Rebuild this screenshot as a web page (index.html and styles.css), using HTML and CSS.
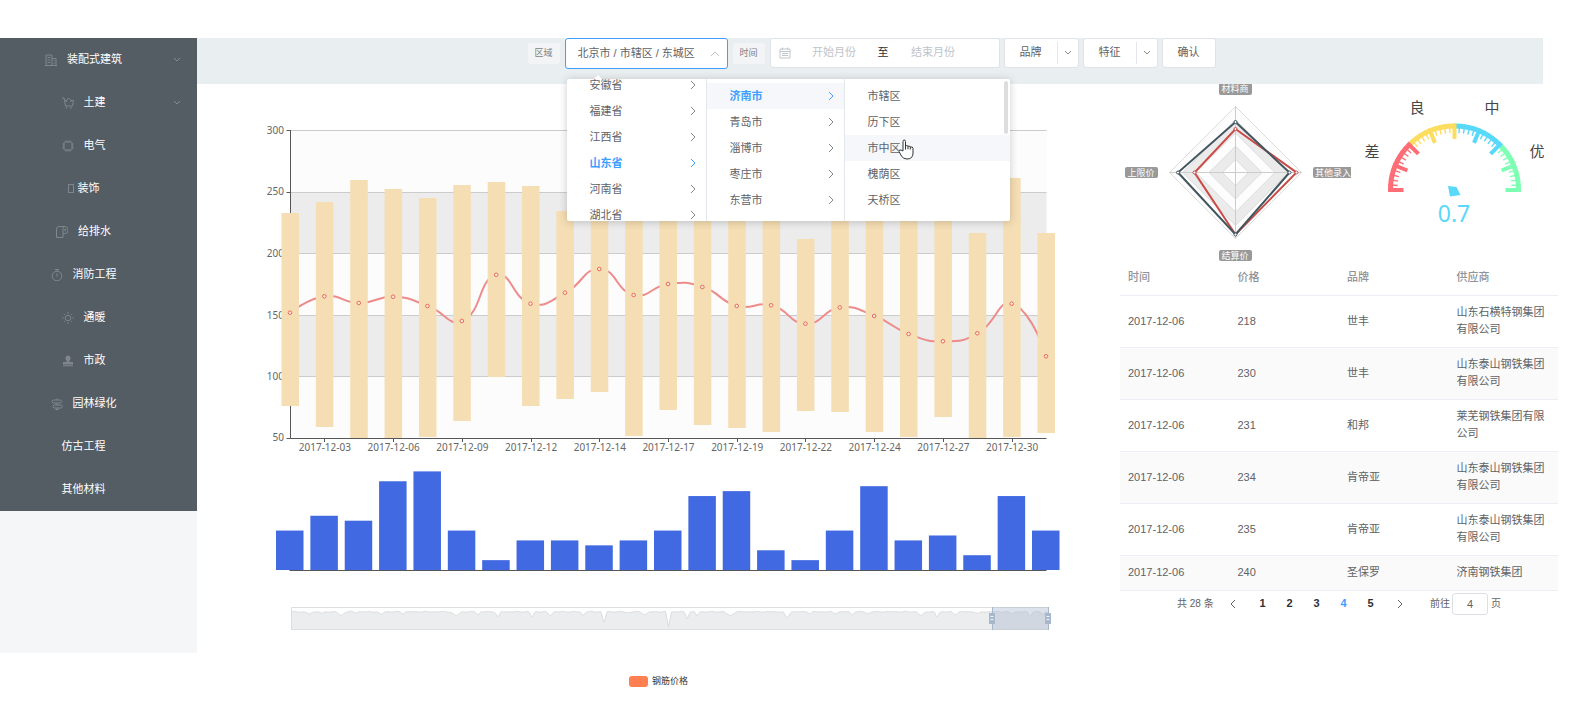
FILE: index.html
```html
<!DOCTYPE html>
<html lang="zh-CN">
<head>
<meta charset="utf-8">
<title>材料价格</title>
<link rel="stylesheet" href="styles.css">
</head>
<body>
<div class="app">
  <aside class="sidebar">
    <nav class="menu">
      <a class="menu-item" href="#"><span class="menu-label"><svg class="icon" viewBox="0 0 12 12"><path d="M1 11.5V1h6v10.500M7 4.500h4v7M0 11.500h12M2.500 3.500h3M2.500 6h3M2.500 8.500h3M8.500 7h1M8.500 9.500h1"/></svg>装配式建筑</span><svg class="chevron" viewBox="0 0 8 8"><path d="M1 2l3 3 3-3"/></svg></a>
      <a class="menu-item" href="#"><span class="menu-label"><svg class="icon" viewBox="0 0 12 12"><path d="M0 1h2l1.500 8h7L11.500 3.500H9M2.500 3.500h2M4.500 5V3.500L6.700 1 9 3.500V5"/><circle cx="4.500" cy="11" r=".4"/><circle cx="9" cy="11" r=".4"/></svg>土建</span><svg class="chevron" viewBox="0 0 8 8"><path d="M1 2l3 3 3-3"/></svg></a>
      <a class="menu-item" href="#"><span class="menu-label"><svg class="icon" viewBox="0 0 12 12"><rect x="2" y="2" width="8" height="8" rx="1"/><path d="M4 .5v1.500M6 .5v1.500M8 .5v1.500M4 10v1.500M6 10v1.500M8 10v1.500M.5 4H2M.5 6H2M.5 8H2M10 4h1.500M10 6h1.500M10 8h1.500"/></svg>电气</span></a>
      <a class="menu-item" href="#"><span class="menu-label menu-label-tight"><svg class="icon-narrow" viewBox="0 0 6 9"><rect x=".5" y=".5" width="5" height="8"/></svg>装饰</span></a>
      <a class="menu-item" href="#"><span class="menu-label"><svg class="icon" viewBox="0 0 12 12"><path d="M3 .5h6.500a2.500 3.500 0 0 1 0 7H7v4H.5V3Q.5.500 3 .500M7 7.500V3Q7 .500 9 .500"/><circle cx="9.300" cy="4" r=".8"/></svg>给排水</span></a>
      <a class="menu-item" href="#"><span class="menu-label"><svg class="icon" viewBox="0 0 12 12"><circle cx="6" cy="7" r="4.800"/><path d="M4 .5h4M6 .5v2M6 4.500v3"/></svg>消防工程</span></a>
      <a class="menu-item" href="#"><span class="menu-label"><svg class="icon" viewBox="0 0 12 12"><circle cx="6" cy="6" r="2.800"/><path d="M6 0v1.500M6 10.500V12M0 6h1.500M10.500 6H12M1.800 1.800l1 1M9.200 9.200l1 1M1.800 10.200l1-1M9.200 2.800l1-1"/></svg>通暖</span></a>
      <a class="menu-item" href="#"><span class="menu-label"><svg class="icon icon-solid" viewBox="0 0 12 12"><path d="M6 .5a2.800 2.800 0 0 1 1.500 5L7.300 7H11v2.500H1V7h3.700l-.2-1.500A2.800 2.800 0 0 1 6 .500M1 10.300h10v1H1z"/></svg>市政</span></a>
      <a class="menu-item" href="#"><span class="menu-label"><svg class="icon" viewBox="0 0 12 12"><path d="M2 2h7.500L11 3.500 9.500 5H2L.8 3.500zM3 7h7.500l1.200 1.500-1.200 1.500H3L1.500 8.500zM6 .5V2M6 5v2M6 10v1.500M4.500 11.500h3"/></svg>园林绿化</span></a>
      <a class="menu-item" href="#"><span class="menu-label">仿古工程</span></a>
      <a class="menu-item" href="#"><span class="menu-label">其他材料</span></a>
    </nav>
  </aside>

  <div class="main">
    <header class="toolbar">
      <label class="tag" for="region">区域</label>
      <div class="cascader">
        <input id="region" class="cascader-input" type="text" value="北京市 / 市辖区 / 东城区" readonly>
        <svg class="cascader-arrow" viewBox="0 0 10 10"><path d="M1 7l4-4 4 4"/></svg>
        <div class="dropdown">
          <span class="dropdown-notch"></span>
          <ul class="column column-province">
            <li class="option">安徽省<svg class="next" viewBox="0 0 8 10"><path d="M2 1l4 4-4 4"/></svg></li>
            <li class="option">福建省<svg class="next" viewBox="0 0 8 10"><path d="M2 1l4 4-4 4"/></svg></li>
            <li class="option">江西省<svg class="next" viewBox="0 0 8 10"><path d="M2 1l4 4-4 4"/></svg></li>
            <li class="option option-active">山东省<svg class="next" viewBox="0 0 8 10"><path d="M2 1l4 4-4 4"/></svg></li>
            <li class="option">河南省<svg class="next" viewBox="0 0 8 10"><path d="M2 1l4 4-4 4"/></svg></li>
            <li class="option">湖北省<svg class="next" viewBox="0 0 8 10"><path d="M2 1l4 4-4 4"/></svg></li>
          </ul>
          <ul class="column column-city">
            <li class="option option-active option-hover">济南市<svg class="next" viewBox="0 0 8 10"><path d="M2 1l4 4-4 4"/></svg></li>
            <li class="option">青岛市<svg class="next" viewBox="0 0 8 10"><path d="M2 1l4 4-4 4"/></svg></li>
            <li class="option">淄博市<svg class="next" viewBox="0 0 8 10"><path d="M2 1l4 4-4 4"/></svg></li>
            <li class="option">枣庄市<svg class="next" viewBox="0 0 8 10"><path d="M2 1l4 4-4 4"/></svg></li>
            <li class="option">东营市<svg class="next" viewBox="0 0 8 10"><path d="M2 1l4 4-4 4"/></svg></li>
          </ul>
          <ul class="column column-district">
            <li class="option">市辖区</li>
            <li class="option">历下区</li>
            <li class="option option-hover">市中区<svg class="hand" viewBox="0 0 16 21"><path d="M5 12V2.500Q5 1 6.200 1T7.500 2.500V7Q9 5.800 10 7.300 11.500 6.300 12.300 8 14.800 7.300 15 9.500V14q0 6-6 6-4 0-5.500-3L1 12.500q0-2 2-1.500z"/><path d="M7.500 7v3.500M10 7.300v3M12.300 8v2.500"/></svg></li>
            <li class="option">槐荫区</li>
            <li class="option">天桥区</li>
          </ul>
          <span class="scrollbar"></span>
        </div>
      </div>
      <label class="tag" for="month-start">时间</label>
      <div class="daterange">
        <svg class="calendar" viewBox="0 0 12 12"><path d="M1 2h10v9H1zM1 4.500h10M3.500.500v2.500M8.500.500v2.500M3 6.500h6M3 8.500h6"/></svg>
        <input id="month-start" class="date-input" type="text" placeholder="开始月份">
        <span class="date-sep">至</span>
        <input class="date-input" type="text" placeholder="结束月份" aria-label="结束月份">
      </div>
      <div class="split">
        <button class="split-main" type="button">品牌</button><button class="split-toggle" type="button" aria-label="展开品牌"><svg class="chevron-dark" viewBox="0 0 8 8"><path d="M1 2l3 3 3-3"/></svg></button>
      </div>
      <div class="split">
        <button class="split-main" type="button">特征</button><button class="split-toggle" type="button" aria-label="展开特征"><svg class="chevron-dark" viewBox="0 0 8 8"><path d="M1 2l3 3 3-3"/></svg></button>
      </div>
      <button class="confirm" type="button">确认</button>
    </header>

    <div class="content">
      <section class="chart-panel">
        <svg id="price-chart" class="price-chart" viewBox="197 84 923 569" role="img" aria-label="钢筋价格"></svg>
      </section>

      <section class="detail">
        <div class="gauges">
          <svg class="radar" viewBox="1120 84 231 177">
            <g class="radar-rings">
              <path class="ring-light" d="M1235.500 106.500l66 66-66 66-66-66z"/>
              <path class="ring-dark" d="M1235.500 119.700l52.800 52.800-52.800 52.800-52.800-52.800z"/>
              <path class="ring-light" d="M1235.500 132.900l39.600 39.600-39.600 39.600-39.600-39.600z"/>
              <path class="ring-dark" d="M1235.500 146.100l26.400 26.400-26.400 26.400-26.400-26.400z"/>
              <path class="ring-light" d="M1235.500 159.300l13.200 13.200-13.200 13.200-13.200-13.200z"/>
              <path d="M1169.500 172.500h132M1235.500 106.500v132"/>
            </g>
            <path class="radar-red" d="M1235.500 129l61 43.500-61 62-41-62z"/>
            <path class="radar-navy" d="M1235.500 122l54 50.500-54 62-57.500-62z"/>
            <g class="radar-red radar-dots"><circle cx="1235.500" cy="129" r="1.500"/><circle cx="1296.500" cy="172.500" r="1.500"/><circle cx="1194.500" cy="172.500" r="1.500"/></g>
            <g class="radar-navy radar-dots"><circle cx="1235.500" cy="122" r="1.500"/><circle cx="1289.500" cy="172.500" r="1.500"/><circle cx="1235.500" cy="234.500" r="1.500"/><circle cx="1178" cy="172.500" r="1.500"/></g>
            <g class="radar-names">
              <rect x="1219" y="83" width="33" height="12" rx="2"/><text x="1235" y="92">材料商</text>
              <rect x="1125" y="167" width="33" height="11" rx="2"/><text x="1141" y="176">上限价</text>
              <rect x="1313" y="167" width="43" height="11" rx="2"/><text x="1333" y="176">其他录入</text>
              <rect x="1219" y="250" width="33" height="11" rx="2"/><text x="1235" y="259">结算价</text>
            </g>
          </svg>
          <svg id="gauge" class="gauge" viewBox="1351 84 207 177">
            <g id="gauge-scale"></g>
            <path class="gauge-needle" d="M1448 186l8.500 1 4 8-10.500 1.500z"/>
            <g class="gauge-names">
              <text x="1372" y="157">差</text><text x="1417" y="113">良</text><text x="1492" y="113">中</text><text x="1537" y="157">优</text>
            </g>
            <text class="gauge-value" x="1454" y="222">0.7</text>
          </svg>
        </div>
        <table class="prices">
          <thead><tr><th>时间</th><th>价格</th><th>品牌</th><th>供应商</th></tr></thead>
          <tbody>
            <tr><td>2017-12-06</td><td>218</td><td>世丰</td><td>山东石横特钢集团有限公司</td></tr>
            <tr><td>2017-12-06</td><td>230</td><td>世丰</td><td>山东泰山钢铁集团有限公司</td></tr>
            <tr><td>2017-12-06</td><td>231</td><td>和邦</td><td>莱芜钢铁集团有限公司</td></tr>
            <tr><td>2017-12-06</td><td>234</td><td>肯帝亚</td><td>山东泰山钢铁集团有限公司</td></tr>
            <tr><td>2017-12-06</td><td>235</td><td>肯帝亚</td><td>山东泰山钢铁集团有限公司</td></tr>
            <tr><td>2017-12-06</td><td>240</td><td>圣保罗</td><td>济南钢铁集团</td></tr>
          </tbody>
        </table>
        <div class="pagination">
          <span class="total">共 28 条</span>
          <button class="page page-prev" type="button" aria-label="上一页"><svg class="next" viewBox="0 0 8 10"><path d="M6 1L2 5l4 4"/></svg></button>
          <button class="page" type="button">1</button>
          <button class="page" type="button">2</button>
          <button class="page" type="button">3</button>
          <button class="page page-current" type="button">4</button>
          <button class="page" type="button">5</button>
          <button class="page page-next" type="button" aria-label="下一页"><svg class="next" viewBox="0 0 8 10"><path d="M2 1l4 4-4 4"/></svg></button>
          <label class="jump">前往<input class="jump-input" type="text" value="4">页</label>
        </div>
      </section>
    </div>
  </div>
</div>
<footer class="legend"><span class="legend-swatch"></span>钢筋价格</footer>
<script src="charts.js"></script>
</body>
</html>
```
FILE: styles.css
```css
* { box-sizing: border-box; }

body {
  margin: 0;
  padding-top: 38px;
  background: #fff;
  color: #606266;
  font-family: "Liberation Sans", "Noto Sans CJK SC", sans-serif;
  font-size: 11px;
  line-height: 17px;
}

ul { margin: 0; padding: 0; list-style: none; }
button, input { font: inherit; color: inherit; }
svg { fill: none; stroke: currentColor; }

.app { display: flex; }

.sidebar { flex: 0 0 197px; background: #f4f6f8; }
.menu { background: #545c64; }
.menu-item {
  display: flex;
  align-items: center;
  height: 43px;
  padding-right: 16px;
  color: #fff;
  text-decoration: none;
}
.menu-label {
  flex: 1;
  display: flex;
  align-items: center;
  justify-content: center;
  gap: 10px;
  padding-right: 14px;
}
.menu-item .chevron { margin-left: -8px; }
.menu-label-tight { gap: 4px; }
.icon { width: 12px; height: 12px; color: #7f868e; }
.icon-narrow { width: 6px; height: 9px; color: #7f868e; }
.icon-solid { fill: currentColor; stroke: none; }
.chevron { width: 8px; height: 8px; color: #848b93; }
.chevron-dark { width: 8px; height: 8px; color: #85888e; }

.main { flex: 1; min-width: 0; padding-right: 28px; }

.toolbar {
  display: flex;
  justify-content: center;
  align-items: flex-start;
  gap: 4px;
  height: 46px;
  margin-right: 15px;
  padding-left: 2px;
  background: #e9eef0;
}
.tag {
  width: 34px;
  height: 23px;
  margin-top: 4px;
  border: 1px solid #ebeef1;
  border-radius: 3px;
  background: #f3f4f5;
  color: #7c7f84;
  font-size: 9px;
  line-height: 21px;
  text-align: center;
}

.cascader { position: relative; width: 163px; }
.cascader-input {
  display: block;
  width: 100%;
  height: 31px;
  padding: 0 12px 3px;
  border: 1px solid #409eff;
  border-radius: 3px;
  background: #fff;
  outline: none;
}
.cascader-arrow {
  position: absolute;
  top: 11px;
  right: 8px;
  width: 10px;
  height: 10px;
  color: #c0c4cc;
}
.dropdown {
  position: absolute;
  z-index: 2;
  top: 41px;
  left: 2px;
  display: flex;
  height: 142px;
  border-radius: 2px;
  background: #fff;
  box-shadow: 0 1px 8px rgba(0, 0, 0, .2);
}
.dropdown-notch {
  position: absolute;
  top: -4px;
  left: 26px;
  border: 5px solid transparent;
  border-top: 0;
  border-bottom-color: #fff;
}
.column { display: flex; flex-direction: column; overflow: hidden; }
.column-province { width: 140px; justify-content: center; border-right: 1px solid #e4e7ed; }
.column-city { width: 138px; padding-top: 4px; border-right: 1px solid #e4e7ed; }
.column-district { width: 165px; padding-top: 4px; }
.option {
  position: relative;
  flex: none;
  display: flex;
  align-items: center;
  justify-content: space-between;
  height: 26px;
  padding: 0 9px 0 23px;
}
.option-active { color: #409eff; font-weight: 700; }
.option-hover { background: #f5f7fa; }
.next { width: 8px; height: 10px; color: #85888e; }
.option-active .next { color: #409eff; }
.hand {
  position: absolute;
  top: 4px;
  left: 53px;
  width: 16px;
  height: 21px;
  fill: #fff;
  color: #333;
}
.scrollbar {
  position: absolute;
  top: 2px;
  right: 2px;
  width: 4px;
  height: 53px;
  border-radius: 2px;
  background: #dcddde;
}

.daterange {
  display: flex;
  align-items: center;
  width: 230px;
  height: 30px;
  padding-left: 8px;
  border: 1px solid #dfe3e8;
  border-radius: 3px;
  background: #fff;
}
.calendar { width: 12px; height: 12px; color: #c0c4cc; }
.date-input {
  width: 87px;
  padding: 0 0 2px;
  border: 0;
  background: none;
  text-align: center;
  outline: none;
}
.date-input::placeholder { color: #c0c4cc; }
.date-sep { width: 12px; padding-bottom: 2px; color: #303133; }

.split, .confirm {
  height: 30px;
  border: 1px solid #dfe3e8;
  border-radius: 3px;
  background: #fff;
}
.split { display: flex; align-items: center; width: 75px; }
.split-main { flex: 1; padding: 0 0 2px; border: 0; background: none; }
.split-toggle {
  display: flex;
  align-items: center;
  justify-content: center;
  width: 21px;
  height: 22px;
  padding: 0;
  border: 0;
  border-left: 1px solid #e4e7ed;
  background: none;
}
.confirm { width: 54px; padding: 0 0 2px; }

.content { display: flex; }
.chart-panel { flex: 1; min-width: 0; }
.price-chart { display: block; width: 100%; height: auto; stroke: none; }
.band-light { fill: #fcfcfc; }
.band-dark { fill: #ececec; }
.grid-line { stroke: #ccc; }
.axis-line { stroke: #54565a; }
.axis-text {
  fill: #666;
  font-family: "Noto Sans", "Noto Sans CJK SC", sans-serif;
  font-size: 10px;
}
.axis-text-end { text-anchor: end; }
.axis-text-mid { text-anchor: middle; }
.range-bar { fill: #f5deb3; }
.volume-bar { fill: #4169e1; }
.price-line { stroke: #ee8b8b; stroke-width: 2; fill: none; }
.price-dot { stroke: #ea6a5e; fill: #fbe9d8; }
.zoom-frame { stroke: #dcdfe1; }
.zoom-shape { fill: #ecedee; stroke: #d9dbdc; }
.zoom-window { fill: #a7b7cc; fill-opacity: .4; }
.zoom-edge { stroke: #a7b7cc; }
.zoom-handle { fill: #a7b7cc; }
.zoom-grip { stroke: #eef1f5; }

.detail { flex: 0 0 438px; }
.gauges { display: flex; }
.radar { width: 231px; height: 177px; }
.gauge { width: 207px; height: 177px; stroke: none; }
.radar-rings { stroke: #ccc; }
.ring-light { fill: #fdfdfd; stroke: #dcdcdc; }
.ring-dark { fill: #ebebeb; stroke: #dcdcdc; }
.radar-red { stroke: #c94a46; stroke-width: 2; }
.radar-navy { stroke: #43565f; stroke-width: 2; }
.radar-dots { fill: #fff; stroke-width: 1; }
.radar-names { stroke: none; font-size: 9px; text-anchor: middle; }
.radar-names rect { fill: #999; }
.radar-names text { fill: #fff; }
.gauge-needle { fill: #58d9f9; }
.gauge-names { fill: #464646; font-size: 15px; text-anchor: middle; }
.gauge-value {
  fill: #58d9f9;
  font-family: "Noto Sans", sans-serif;
  font-size: 23px;
  text-anchor: middle;
}

.prices { width: 100%; table-layout: fixed; border-collapse: separate; border-spacing: 0; }
.prices th, .prices td {
  padding: 8px 8px 9px;
  border-bottom: 1px solid #ebeef5;
  text-align: left;
}
.prices th { color: #909399; font-weight: 500; }
.prices tbody tr:nth-child(even) { background: #fafafa; }

.pagination {
  display: flex;
  align-items: center;
  height: 25px;
  padding-left: 57px;
  font-size: 10px;
}
.total { width: 42px; }
.page {
  width: 27px;
  padding: 0;
  border: 0;
  background: none;
  color: #303133;
  font-size: 11px;
  font-weight: 700;
  line-height: 17px;
}
.page .next { display: block; margin: 0 auto; color: #606266; }
.page-current { color: #409eff; }
.page-prev { width: 27px; margin-right: 3px; }
.page-next { width: 32px; }
.jump { display: flex; align-items: center; margin-left: 14px; }
.jump-input {
  width: 36px;
  height: 22px;
  margin: 0 3px 0 2px;
  padding: 0;
  border: 1px solid #dcdfe6;
  border-radius: 3px;
  background: #fff;
  font-size: 11px;
  text-align: center;
}

.legend {
  display: flex;
  align-items: center;
  justify-content: center;
  gap: 4px;
  padding: 20px 466px 20px 197px;
  color: #333;
  font-size: 9px;
}
.legend-swatch { width: 19px; height: 11px; border-radius: 3px; background: #ff7f50; }
```
FILE: charts.js
```js
const NS = 'http://www.w3.org/2000/svg';

function add(parent, tag, attrs, text) {
  const el = document.createElementNS(NS, tag);
  for (const key in attrs) el.setAttribute(key, attrs[key]);
  if (text !== undefined) el.textContent = text;
  parent.appendChild(el);
  return el;
}

const LEFT = 290.5, RIGHT = 1046.5, BASE = 438, STEP = (RIGHT - LEFT) / 22;
const xAt = i => LEFT + STEP * i;

const ranges = [
  [213, 406], [202, 427], [180, 438], [189, 438], [198, 437], [185, 421],
  [182, 377], [186, 406], [211, 399], [180, 392], [190, 436], [190, 410],
  [190, 425], [190, 428], [190, 432], [239, 411], [190, 412], [190, 432],
  [190, 437], [190, 417], [233, 438], [178, 437], [233, 433]
];
const prices = [
  312.7, 296.3, 303, 296.7, 306, 321, 274.8, 303.7, 292.7, 269, 295, 284,
  287, 306, 305.3, 323.7, 307.5, 316, 334, 341.3, 333.3, 303.7, 356.3
];
const volumes = [8, 11, 10, 18, 20, 8, 2, 6, 6, 5, 6, 8, 15, 16, 4, 2, 8, 17, 6, 7, 3, 15, 8];
const days = ['03', '06', '09', '12', '14', '17', '19', '22', '24', '27', '30'];

function smoothPath(points) {
  const smooth = 0.5;
  const dist = (a, b) => Math.hypot(a[0] - b[0], a[1] - b[1]);
  let d = `M${points[0]}`;
  let out = points[0];
  for (let i = 1; i < points.length; i++) {
    const p = points[i], prev = points[i - 1], next = points[i + 1];
    let inn = p, nextOut = p;
    if (next) {
      const v = [next[0] - prev[0], next[1] - prev[1]];
      const r = dist(p, next) / (dist(p, next) + dist(p, prev));
      inn = [p[0] - v[0] * smooth * (1 - r), p[1] - v[1] * smooth * (1 - r)];
      nextOut = [p[0] + v[0] * smooth * r, p[1] + v[1] * smooth * r];
    }
    d += `C${out} ${inn} ${p}`;
    out = nextOut;
  }
  return d;
}

function drawPriceChart(svg) {
  const rows = [130.5, 192, 253.5, 315.5, 376.5, BASE];
  for (let k = 0; k < 5; k++) {
    add(svg, 'rect', { class: k % 2 ? 'band-dark' : 'band-light', x: LEFT, y: rows[k], width: RIGHT - LEFT, height: rows[k + 1] - rows[k] });
  }
  rows.forEach((y, k) => {
    const line = Math.floor(y) + 0.5;
    if (k < 5) add(svg, 'path', { class: 'grid-line', d: `M${LEFT} ${line}H${RIGHT}` });
    add(svg, 'path', { class: 'axis-line', d: `M${LEFT - 4} ${line}h4` });
    add(svg, 'text', { class: 'axis-text axis-text-end', x: 284, y: y + 3 }, 300 - k * 50);
  });
  add(svg, 'path', { class: 'axis-line', d: `M${LEFT} 130V438.500H${RIGHT}` });
  days.forEach((day, k) => {
    const x = xAt(2 * k + 1);
    add(svg, 'path', { class: 'axis-line', d: `M${Math.floor(x) + 0.5} 438v4` });
    add(svg, 'text', { class: 'axis-text axis-text-mid', x, y: 451 }, `2017-12-${day}`);
  });

  add(svg, 'path', { class: 'price-line', d: smoothPath(prices.map((y, i) => [xAt(i), y])) });
  ranges.forEach(([top, bottom], i) => {
    add(svg, 'rect', { class: 'range-bar', x: xAt(i) - 9, y: top, width: 17.5, height: bottom - top });
  });
  prices.forEach((y, i) => add(svg, 'circle', { class: 'price-dot', cx: xAt(i) - 0.5, cy: y, r: 1.8 }));

  volumes.forEach((v, i) => {
    add(svg, 'rect', { class: 'volume-bar', x: xAt(i) - 14.5, y: 570 - v * 4.93, width: 27.5, height: v * 4.93 });
  });
  add(svg, 'path', { class: 'axis-line', d: `M${LEFT - 1} 570.500H${RIGHT}` });
}

function drawZoomBar(svg) {
  const dips = [
    [309, 2, 6], [322, 2, 3], [341, 4, 5], [355, 1, 3], [381, 3, 4], [403, 2, 3], [456, 4, 6],
    [478, 3, 3], [498, 6, 3], [532, 6, 3], [550, 4, 4], [583, 4, 3], [604, 12, 3], [628, 1, 5],
    [645, 3, 5], [668.5, 15, 3], [687, 7, 3], [697, 4, 3], [730, 4, 6], [787, 7, 4], [810, 2, 3],
    [835, 2, 4], [852, 3, 3], [868, 2, 4], [921, 4, 5], [937, 6, 3], [955, 3, 4], [978, 2, 4],
    [1012, 2, 4], [1030, 5, 3], [1043, 3, 3]
  ];
  let d = 'M291.500 629.500';
  for (let x = 291.5; x <= 1048.5; x += 1) {
    let y = 611.8 + 0.5 * Math.sin(x * 0.55) * Math.sin(x * 0.13);
    for (const [cx, depth, half] of dips) y += depth * Math.max(0, 1 - Math.abs(x - cx) / half);
    d += `L${x} ${y.toFixed(1)}`;
  }
  add(svg, 'path', { class: 'zoom-shape', d: d + 'V629.500Z' });
  add(svg, 'path', { class: 'zoom-frame', d: 'M291.500 607.500H1048.500V629.500H291.500Z', fill: 'none' });
  add(svg, 'rect', { class: 'zoom-window', x: 992, y: 607, width: 57, height: 23 });
  for (const x of [992, 1048]) {
    add(svg, 'path', { class: 'zoom-edge', d: `M${x + 0.5} 607v23` });
    add(svg, 'rect', { class: 'zoom-handle', x: x - 3, y: 613, width: 6, height: 11 });
    add(svg, 'path', { class: 'zoom-grip', d: `M${x - 1.5} 616.500h3M${x - 1.5} 619.500h3` });
  }
}

function drawGauge(group) {
  const cx = 1454.5, cy = 190, R = 66.5;
  const colors = ['#ff6e76', '#fddd60', '#58d9f9', '#7cffb2'];
  const at = (deg, r) => {
    const a = (180 + deg) * Math.PI / 180;
    return `${(cx + r * Math.cos(a)).toFixed(2)} ${(cy + r * Math.sin(a)).toFixed(2)}`;
  };
  colors.forEach((stroke, k) => {
    add(group, 'path', { d: `M${at(k * 45, R - 2.5)}A64 64 0 0 1 ${at(k * 45 + 45, R - 2.5)}`, stroke, 'stroke-width': 5, fill: 'none' });
  });
  for (let t = 0; t <= 40; t++) {
    const major = t % 5 === 0;
    const stroke = colors[Math.max(0, Math.ceil(t / 10) - 1)];
    add(group, 'path', { d: `M${at(t * 4.5, R)}L${at(t * 4.5, R - (major ? 15.5 : 9.5))}`, stroke, 'stroke-width': major ? 4 : 1.4 });
  }
}

const chart = document.getElementById('price-chart');
drawPriceChart(chart);
drawZoomBar(chart);
drawGauge(document.getElementById('gauge-scale'));
```
